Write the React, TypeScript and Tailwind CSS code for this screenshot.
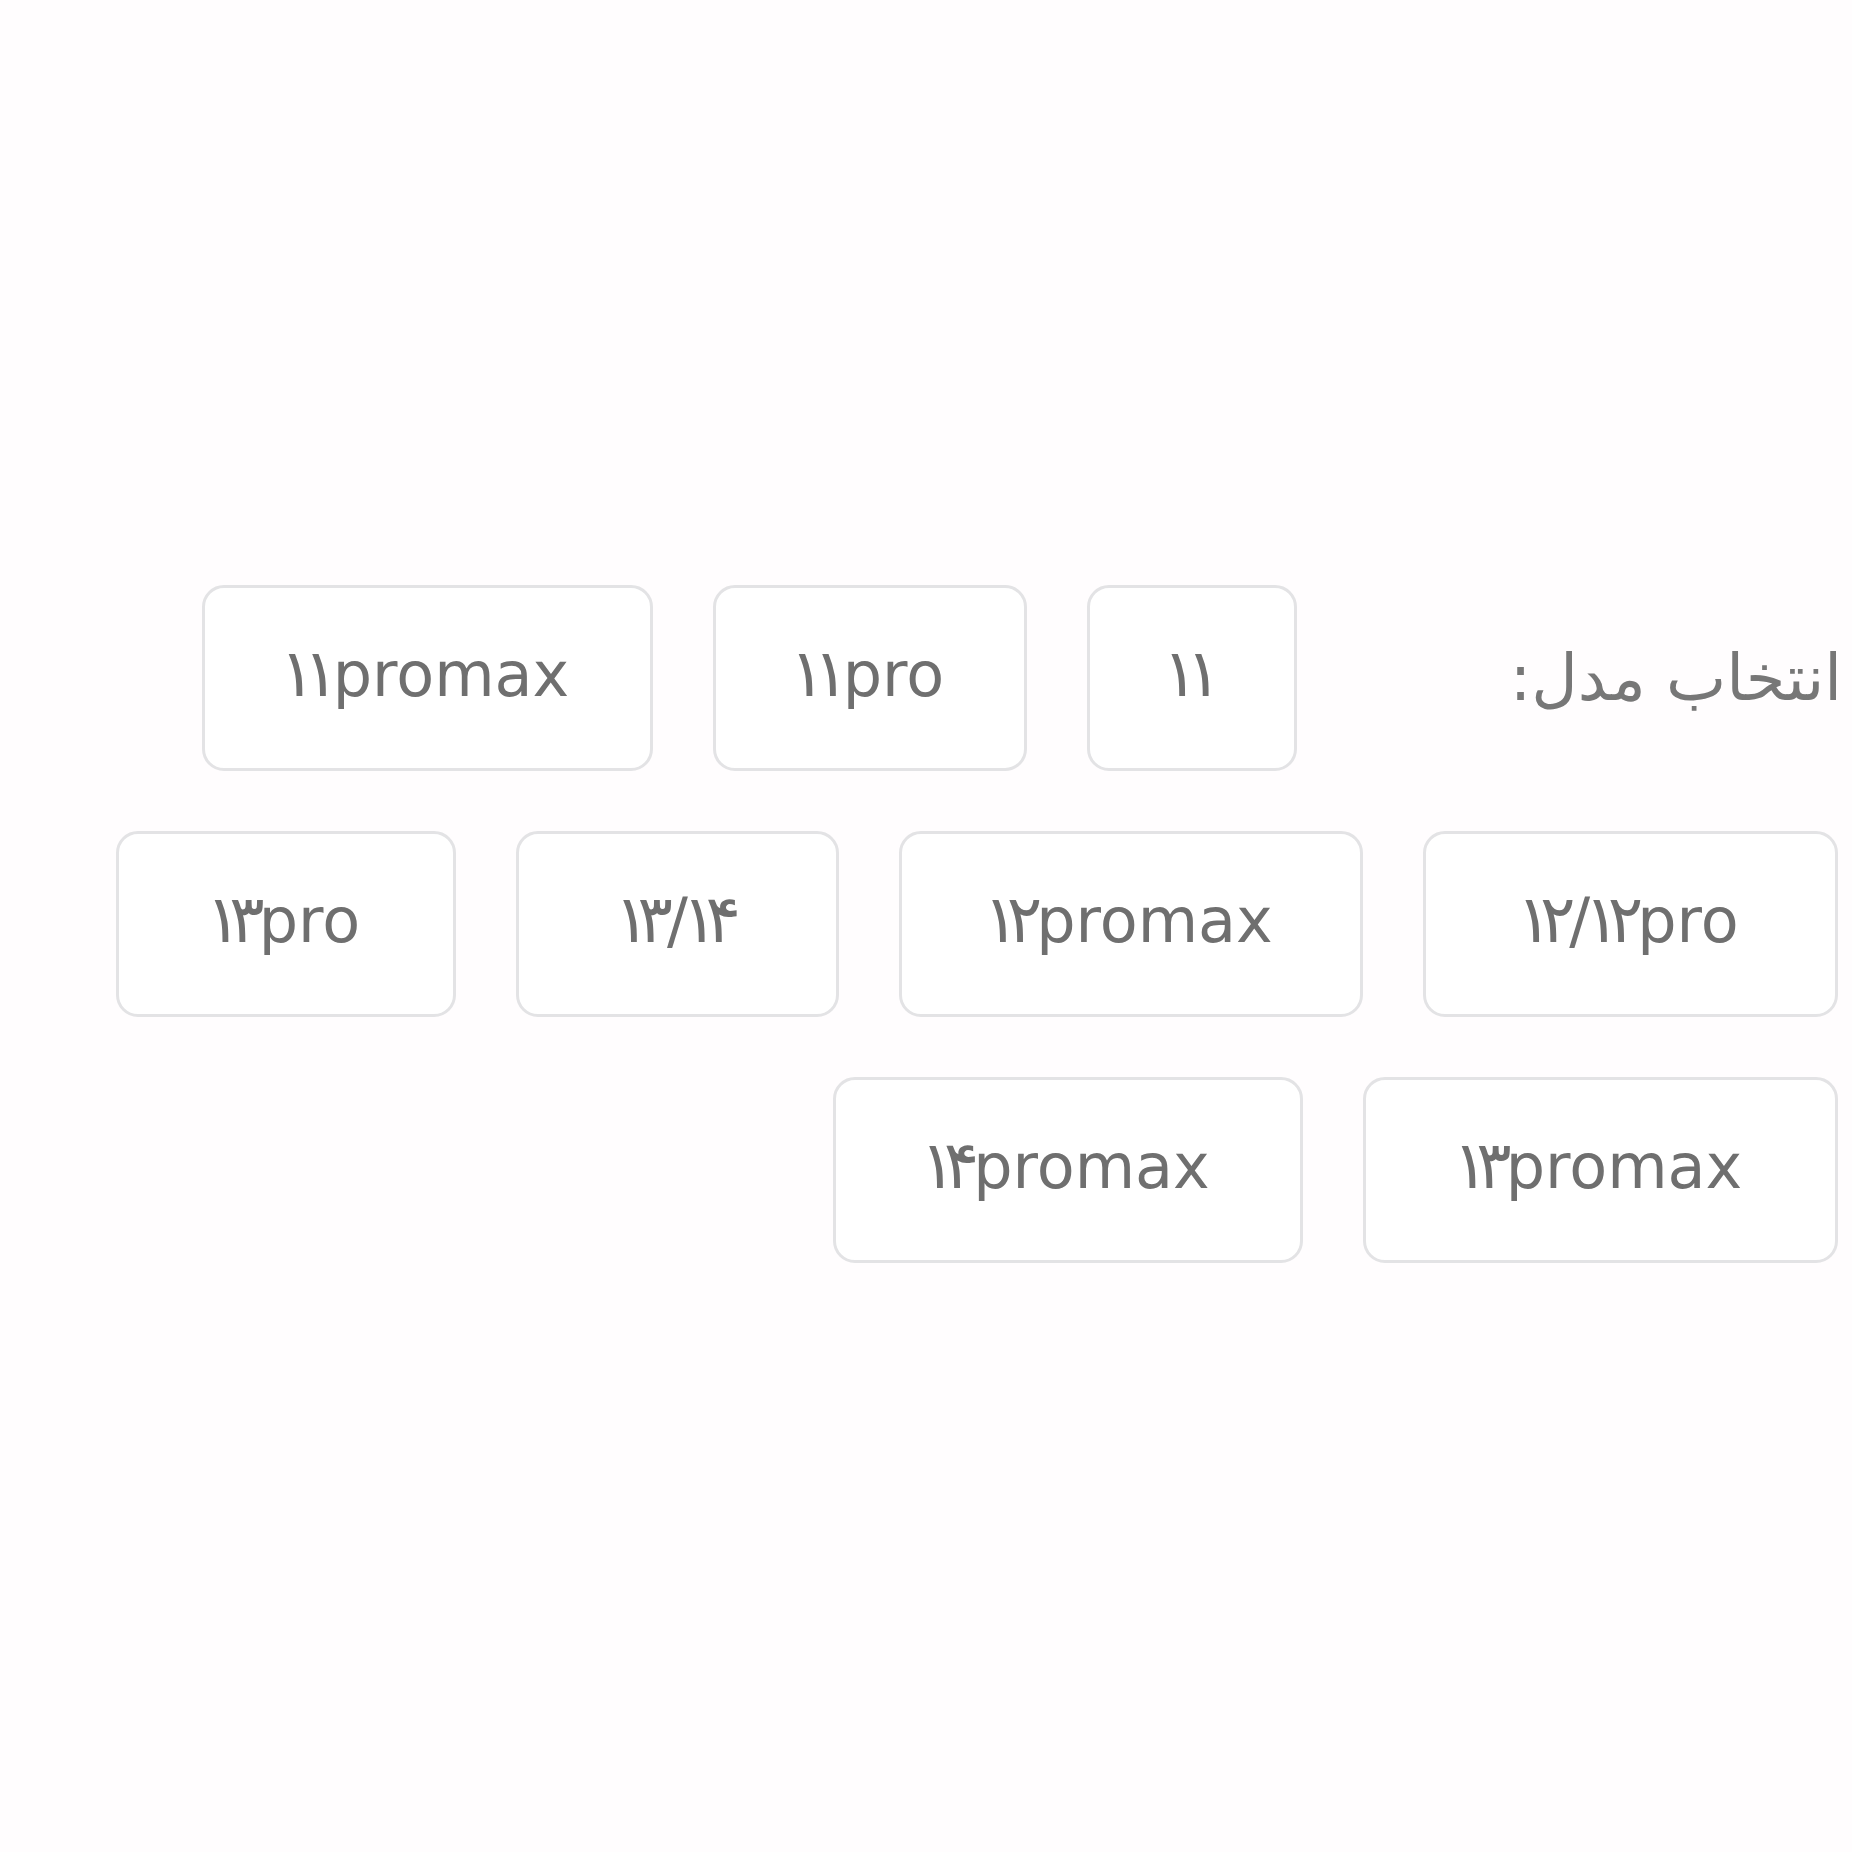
const models = [
  { label: '۱۱', width: 'w-[210px]' },
  { label: '۱۱pro', width: 'w-[314px]' },
  { label: '۱۱promax', width: 'w-[451px]' },
  { label: '۱۲/۱۲pro', width: 'w-[415px]' },
  { label: '۱۲promax', width: 'w-[464px]' },
  { label: '۱۳/۱۴', width: 'w-[323px]' },
  { label: '۱۳pro', width: 'w-[340px]' },
  { label: '۱۳promax', width: 'w-[475px]' },
  { label: '۱۴promax', width: 'w-[470px]' },
]

// persian digits sit loose in DejaVu and letter-spacing is ignored for them,
// so each digit gets its own box with a negative margin
function Label({ text }: { text: string }) {
  return (
    <span dir="ltr" className="whitespace-nowrap">
      {Array.from(text).map((ch, i) =>
        /[۰-۹]/.test(ch) ? (
          <span key={i} className="inline-block -mx-[6px] text-[66px]">
            {ch}
          </span>
        ) : (
          <span key={i}>{ch}</span>
        )
      )}
    </span>
  )
}

function ModelButton({ label, width }: { label: string; width: string }) {
  return (
    <button
      type="button"
      className={`${width} h-[186px] pb-[10px] flex items-center justify-center rounded-[22px] border-[3px] border-[#e3e3e5] bg-white text-[62px] text-[#6f6f6f]`}
    >
      <Label text={label} />
    </button>
  )
}

export default function App() {
  return (
    <div className="w-full min-h-[1852px] overflow-hidden bg-[#fffdfe] font-['DejaVu_Sans',sans-serif]">
      <div dir="rtl" className="flex flex-wrap items-center gap-[60px] pt-[585px] pr-[14px]">
        <div className="w-[485px] -mr-[4px] text-right text-[64px] text-[#777777] whitespace-nowrap">
          انتخاب مدل:
        </div>
        {models.map((m) => (
          <ModelButton key={m.label} label={m.label} width={m.width} />
        ))}
      </div>
    </div>
  )
}
